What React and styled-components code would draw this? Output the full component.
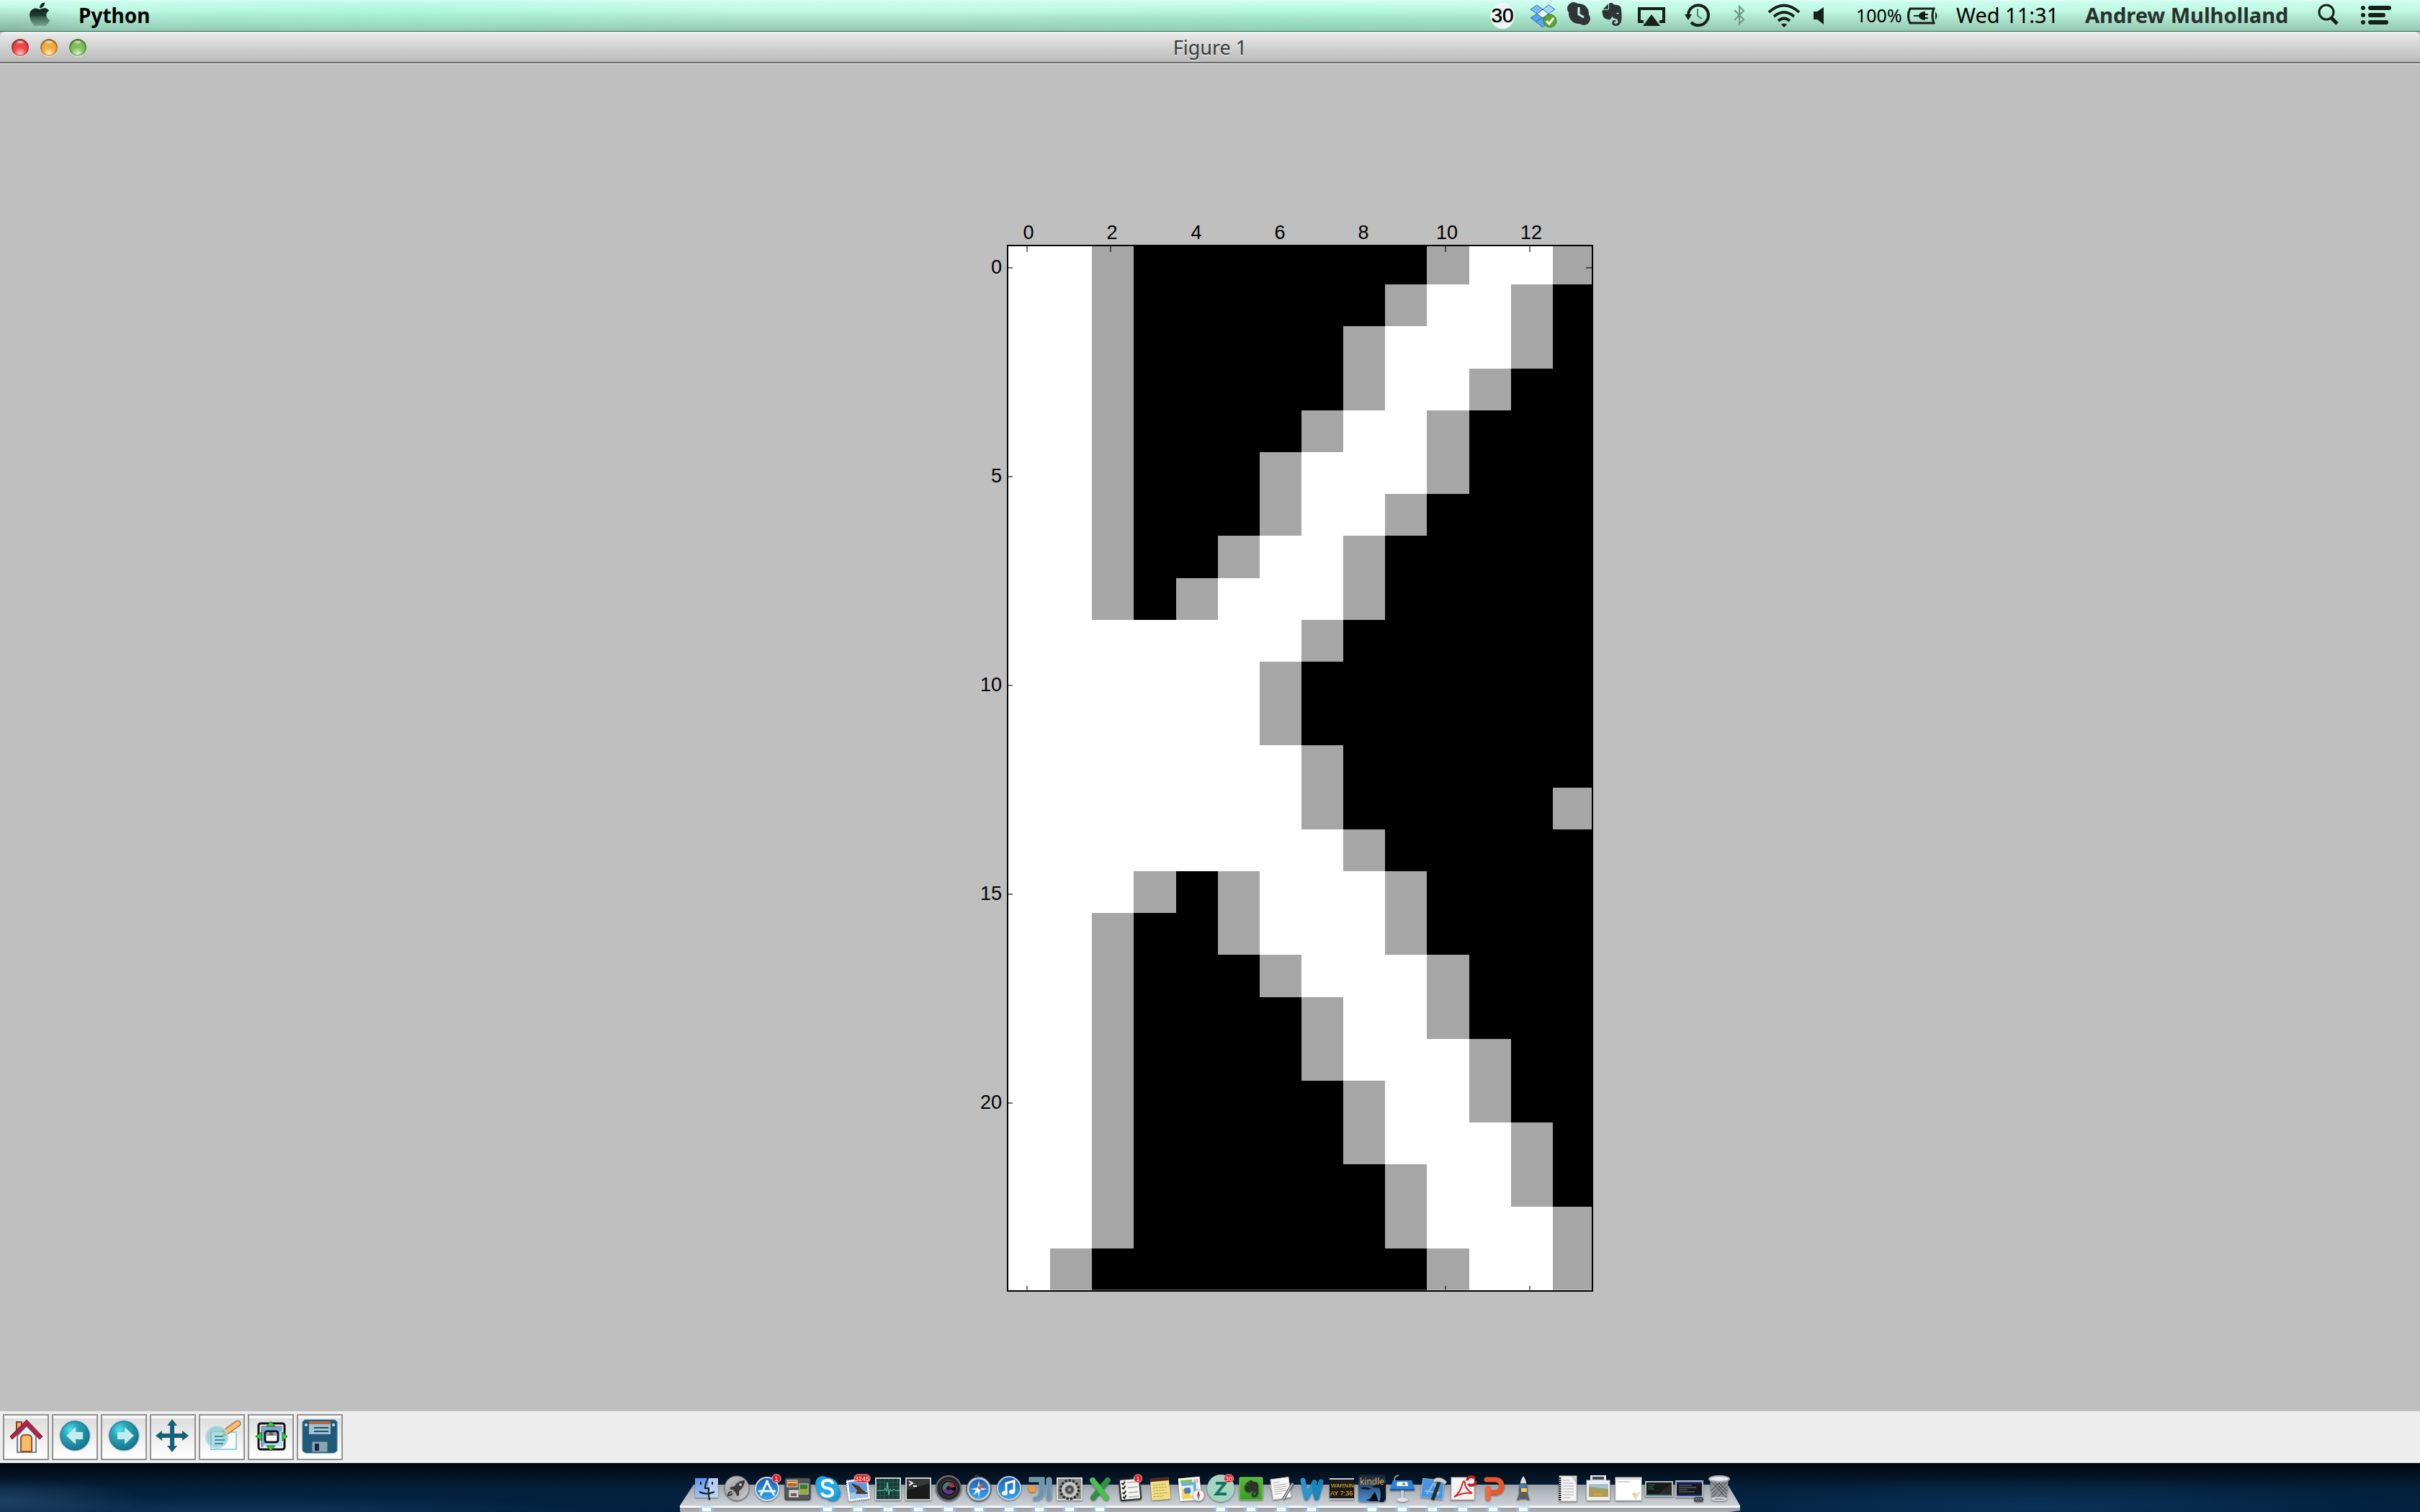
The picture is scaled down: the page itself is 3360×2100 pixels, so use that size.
import React from 'react';
import styled, { createGlobalStyle } from 'styled-components';
import { FaApple } from 'react-icons/fa';
import { SiEvernote } from 'react-icons/si';

const GlobalStyle = createGlobalStyle`
  *, *::before, *::after { box-sizing: border-box; }
  body { margin: 0; background: #04172b; }
  button { font: inherit; color: inherit; border: 0; background: none; padding: 0; margin: 0; }
`;

const uiFont = '"Noto Sans", "Open Sans", sans-serif';
const plotFont = '"Liberation Sans", Arial, sans-serif';

const Screen = styled.div`
  display: flex;
  flex-direction: column;
  min-height: 100vh;
  overflow: hidden;
  font-family: ${uiFont};
`;

/* ---------- menu bar ---------- */

const MenuBar = styled.header`
  display: flex;
  justify-content: space-between;
  height: 44px;
  border-bottom: 1px solid #2c6650;
  background:
    radial-gradient(ellipse 140px 40px at 0 44px, rgba(90, 120, 110, 0.25), transparent),
    radial-gradient(ellipse 500px 40px at 16% 60%, rgba(130, 240, 210, 0.28), transparent),
    radial-gradient(ellipse 500px 30px at 54% 80%, rgba(130, 230, 195, 0.35), transparent),
    linear-gradient(#e2fff8 0, #c9fdec 3px, #bff8e2 14px, #a8dcc7 30px, #93c8b3 43px);
  color: #000;
  text-shadow: 0 2px 0 rgba(255, 255, 255, 0.35);
`;

const MenuGroup = styled.nav`
  display: flex;
  align-items: flex-start;
  padding: 0 40px;
`;

const MenuItem = styled.button`
  display: flex;
  align-items: center;
  justify-content: flex-start;
  flex: none;
  width: ${(p) => p.$w}px;
  height: 42px;
  margin-left: ${(p) => p.$before || 0}px;
  font-size: ${(p) => p.$size || 29}px;
  font-weight: ${(p) => (p.$bold ? 700 : 400)};
  color: ${(p) => p.$color || '#000'};
  line-height: 42px;
  white-space: nowrap;
  svg { display: block; overflow: visible; }
`;

const DayBadge = styled(MenuItem)`
  justify-content: center;
  height: 36px;
  margin-top: 4px;
  border-radius: 50%;
  background: #eef5f4;
  font-family: ${plotFont};
  font-size: 28px;
  line-height: 36px;
  text-shadow: 0 0 1px #223;
`;

const ink = '#15201c';

const Extra = ({ label, w, before, children }) => (
  <MenuItem $w={w} $before={before} aria-label={label}>
    <svg width={w} height="42" viewBox={`0 0 ${w} 42`}>{children}</svg>
  </MenuItem>
);

/* ---------- window ---------- */

const Window = styled.main`
  display: flex;
  flex-direction: column;
  flex: 1;
  background: #bfbfbf;
`;

const TitleBar = styled.div`
  display: grid;
  grid-template-columns: 1fr auto 1fr;
  align-items: center;
  height: 45px;
  padding: 0 16px;
  border-bottom: 1px solid #f0f0f0;
  background: linear-gradient(#f2f2f2 0, #e4e4e4 6px, #b9b9b9 42px, #68686a 42px, #68686a 44px);
  border-radius: 8px 8px 0 0;
`;

const TitleText = styled.h1`
  margin: 0;
  font-size: 27px;
  font-weight: 400;
  line-height: 42px;
  color: #3c3c3c;
  text-shadow: 0 2px 0 rgba(255, 255, 255, 0.4);
`;

const Lights = styled.div`
  display: flex;
  gap: 16px;
`;

const Light = styled.button`
  width: 24px;
  height: 24px;
  border-radius: 50%;
  background:
    radial-gradient(ellipse 8px 3px at 50% 4px, rgba(255, 255, 255, 0.9), transparent),
    radial-gradient(ellipse 9px 8px at 50% 20px, rgba(255, 255, 255, 0.75), transparent),
    ${(p) => p.$fill};
  box-shadow: inset 0 1px 3px 1px ${(p) => p.$edge}, 0 1px 1px rgba(255, 255, 255, 0.7);
`;

const FigureArea = styled.section`
  display: flex;
  flex: 1;
  justify-content: center;
  align-items: flex-start;
  padding: 211px 0 160px 210px;
`;

const ChartSvg = styled.svg`
  display: block;
  font-family: ${plotFont};
  font-size: 27px;
`;

const ToolRow = styled.div`
  display: flex;
  align-items: center;
  gap: 4px;
  height: 72px;
  padding: 0 4px;
  background: #ededed;
`;

const ToolButton = styled.button`
  width: 64px;
  height: 64px;
  border: 2px solid #929292;
  background: linear-gradient(#f8f8f8 0, #f8f8f8 4px, #dedede 4px, #fdfdfd 56px);
  svg { display: block; }
`;

/* ---------- dock ---------- */

const Desktop = styled.footer`
  display: flex;
  justify-content: center;
  align-items: flex-end;
  height: 68px;
  background:
    radial-gradient(ellipse 200px 30px at 0 52px, rgba(70, 110, 150, 0.4), transparent),
    radial-gradient(ellipse 500px 24px at 10% 100%, rgba(40, 80, 125, 0.4), transparent),
    radial-gradient(ellipse 500px 40px at 84% 90%, rgba(20, 70, 120, 0.45), transparent),
    linear-gradient(#01060c 0, #04111f 14px, #05203b 36px, #03213f 68px);
`;

const DockShelf = styled.div`
  position: relative;
  display: flex;
  height: 52px;
  padding: 0 8px 0 16px;
  &::before {
    content: '';
    position: absolute;
    inset: 14px 0 0 0;
    background: linear-gradient(#9da3ab 0, #b4b9c0 12px, #cdd1d6 29px, #fff 30px, #fff 32px, #9b9ea3 32px, #aeb0b3 38px);
    clip-path: polygon(19px 0, 1455px 0, 100% 29px, 100% 36px, 99% 38px, 1px 38px, 0 36px, 0 29px);
  }
`;

const DockGap = styled.div`
  width: 20px;
`;

const DockItem = styled.button`
  position: relative;
  display: flex;
  flex-direction: column;
  align-items: center;
  width: 42px;
  height: 52px;
  svg { display: block; overflow: visible; filter: drop-shadow(0 1px 1px rgba(0, 0, 0, 0.5)); }
  &::after {
    content: '';
    width: 12px;
    height: 5px;
    margin-top: 4px;
    background: #fff;
    box-shadow: 0 0 5px 2px #9fd4f5;
    visibility: ${(p) => (p.$running ? 'visible' : 'hidden')};
  }
`;

/* ---------- chart ---------- */

/* w = full, g = partial, . = empty */
const rows = [
  'wwg.......gwwg', 'wwg......gwwg.', 'wwg.....gwwwg.', 'wwg.....gwwg..', 'wwg....gwwg...',
  'wwg...gwwwg...', 'wwg...gwwg....', 'wwg..gwwg.....', 'wwg.gwwwg.....', 'wwwwwwwg......',
  'wwwwwwg.......', 'wwwwwwg.......', 'wwwwwwwg......', 'wwwwwwwg.....g', 'wwwwwwwwg.....',
  'wwwg.gwwwg....', 'wwg..gwwwg....', 'wwg...gwwwg...', 'wwg....gwwg...', 'wwg....gwwwg..',
  'wwg.....gwwg..', 'wwg.....gwwwg.', 'wwg......gwwg.', 'wwg......gwwwg', 'wg........gwwg',
];

const tone = { w: '#fff', g: '#a6a6a6' };
const xTicks = [0, 2, 4, 6, 8, 10, 12];
const yTicks = [0, 5, 10, 15, 20];
const xAt = (t) => 76 + Math.round((t * 814) / 14);
const yAt = (t) => 72 + t * 58;

const Chart = () => (
  <ChartSvg width="870" height="1500" viewBox="0 0 870 1500" role="img" aria-label="Figure 1 plot">
    <defs>
      <clipPath id="axes"><rect x="49" y="41" width="813" height="1452" /></clipPath>
    </defs>
    <rect x="48" y="40" width="814" height="1454" fill="#fff" />
    <g clipPath="url(#axes)">
      <svg x="50" y="37" width="814" height="1455" viewBox="0 0 14 25" preserveAspectRatio="none" shapeRendering="crispEdges">
        <rect width="14" height="25" fill="#000" />
        {rows.map((row, y) => [...row].map((c, x) => c !== '.' && (
          <rect key={`${x}-${y}`} x={x} y={y} width="1" height="1" fill={tone[c]} />
        )))}
      </svg>
    </g>
    <g stroke="#000" strokeOpacity="0.55" strokeWidth="2">
      {xTicks.map((t) => <path key={t} d={`M${xAt(t)} 42v8M${xAt(t)} 1486v6`} />)}
      {yTicks.map((t) => <path key={t} d={`M50 ${yAt(t)}h6M860 ${yAt(t)}h-8`} />)}
    </g>
    <path d="M50 1492H860" stroke="#fff" strokeOpacity="0.8" />
    <rect x="49" y="41" width="812" height="1452" fill="none" stroke="#000" strokeWidth="2" />
    {xTicks.map((t) => <text key={t} x={xAt(t) + 2} y="32" textAnchor="middle">{t}</text>)}
    {yTicks.map((t) => <text key={t} x="41" y={yAt(t) + 8} textAnchor="end">{t}</text>)}
  </ChartSvg>
);

/* ---------- toolbar icons ---------- */

const ball = (
  <>
    <circle cx="30" cy="28" r="22" fill="#8fbfe6" opacity="0.6" />
    <circle cx="30" cy="28" r="20" fill="url(#teal)" stroke="#146077" strokeWidth="1" />
  </>
);

const tools = [
  ['Home', (
    <>
      <path d="M17 9h7v14h-7z" fill="#f5b95c" stroke="#8a3b35" strokeWidth="2" />
      <path d="M18 28L31 14l13 14v23H18z" fill="#e9eef0" stroke="#6d8a8f" strokeWidth="2" />
      <path d="M23 50V31q1-4 5-4h5q4 0 5 4v19z" fill="#f7bd62" stroke="#984c33" strokeWidth="2" />
      <path d="M31 6L8 29l3 4 20-19 18 19 4-4z" fill="#b0234a" stroke="#6f1c33" strokeWidth="1" />
    </>
  )],
  ['Back', <>{ball}<path d="M18 28l13-12v7h10v10H31v7z" fill="#c3ecee" /></>],
  ['Forward', <>{ball}<path d="M44 28L31 16v7H21v10h10v7z" fill="#c3ecee" /></>],
  ['Pan', (
    <g fill="#176079">
      <path d="M26 12h6v32h-6zM14 25h31v6H14z" />
      <path d="M29 5l7 9H22zM29 51l7-9H22zM6 28l9-7v14zM52 28l-9-7v14z" />
    </g>
  )],
  ['Zoom', (
    <>
      <rect x="15" y="23" width="35" height="24" fill="#fbf9fd" stroke="#93d3dd" strokeWidth="2" />
      <path d="M34 24L52 11" stroke="#ad7843" strokeWidth="9" strokeLinecap="round" />
      <path d="M34 24L52 11" stroke="#fbbd72" strokeWidth="6" strokeLinecap="round" />
      <circle cx="23" cy="30" r="15" fill="#86c5ce" fillOpacity="0.7" stroke="#b5dce4" strokeWidth="2" />
      <path d="M16 23h16v17H16z" fill="#b4e0e6" fillOpacity="0.7" />
      <path d="M20 29h12M20 34h14M20 39h12" stroke="#3d91a3" strokeWidth="2" />
    </>
  )],
  ['Subplots', (
    <>
      <rect x="13" y="11" width="36" height="36" rx="3" fill="#fff" stroke="#111" strokeWidth="3" />
      <path d="M16 14h30v4H20v26h-4z" fill="#999" />
      <rect x="18" y="17" width="28" height="26" fill="#6eabe2" />
      <path d="M18 43L46 20v23z" fill="#b5dff5" />
      <rect x="22" y="22" width="18" height="15" rx="3" fill="#fff" stroke="#111" strokeWidth="3" />
      <path d="M24 23h14v5H24z" fill="#999" />
      <path d="M28 23h5v5h-5z" fill="#567" />
      <g fill="#3ccc42" stroke="#176b1c" strokeWidth="1">
        <path d="M30 8l6 7H24zM30 49l6-7H24zM9 29l8-6v12zM53 29l-7-6v12z" />
      </g>
    </>
  )],
  ['Save', (
    <>
      <path d="M9 6h42l3 3v40l-4 3H10l-4-3V9z" fill="#205a78" stroke="#3f7e9d" strokeWidth="1" />
      <path d="M15 8h30v4H15z" fill="#b8683d" />
      <path d="M15 12h30v14H15z" fill="#9fc1d0" />
      <path d="M22 17h20M22 22h20" stroke="#24516b" strokeWidth="2" />
      <path d="M19 36h22v15H19z" fill="#8ba6b2" stroke="#35536a" strokeWidth="1" />
      <path d="M23 39h6v10h-6z" fill="#16274a" />
      <circle cx="11" cy="13" r="2" fill="#d4e6ee" />
      <circle cx="49" cy="13" r="2" fill="#d4e6ee" />
    </>
  )],
];

/* ---------- dock icons ---------- */

const Badge = ({ x, w, children }) => (
  <g>
    <rect x={x - w / 2} y="0" width={w} height="11" rx="5" fill="#dc1f2b" stroke="#f4b7ba" strokeWidth="1" />
    <text x={x} y="9" fontSize="9" textAnchor="middle" fill="#fff" fontFamily={plotFont}>{children}</text>
  </g>
);

const dockApps = [
  ['Finder', 1, (
    <>
      <rect x="5" y="5" width="32" height="27" fill="url(#finder)" />
      <path d="M24 5h13v27H23z" fill="#c7d8f5" opacity="0.8" />
      <path d="M25 2q-6 9-6 17h5q-1 8 1 16M11 24q10 5 21 0M13 10v4M29 10v4" fill="none" stroke="#15181f" strokeWidth="2" />
    </>
  )],
  ['Launchpad', 0, (
    <>
      <circle cx="21" cy="19" r="17" fill="url(#silver)" stroke="#777" />
      <path d="M32 8q-9 0-14 8l-7 2 2 3 3 0 4 5 1 4 3-1 0-6q8-6 8-15z" fill="#3b3b3d" />
      <circle cx="26" cy="14" r="2" fill="#bbb" />
      <path d="M14 24q-5 0-5 5 4 0 6-3" fill="none" stroke="#3b3b3d" strokeWidth="2" />
    </>
  )],
  ['App Store', 0, (
    <>
      <circle cx="21" cy="20" r="16" fill="url(#blue)" stroke="#d6dce2" strokeWidth="2" />
      <path d="M22 8L12 29M20 8l11 21M9 23h24" stroke="#eaf4ff" strokeWidth="3" />
      <Badge x={34} w={12}>1</Badge>
    </>
  )],
  ['Mission Control', 0, (
    <>
      <rect x="4" y="5" width="35" height="30" rx="2" fill="#55565a" stroke="#37383b" />
      <rect x="7" y="8" width="14" height="9" fill="#b8632a" stroke="#ddd" />
      <path d="M8 10h12v2H8z" fill="#f3bd62" />
      <rect x="24" y="13" width="12" height="14" fill="#3c7a2b" stroke="#ddd" />
      <path d="M25 20h10v6H25z" fill="#9aa82c" />
      <rect x="10" y="22" width="12" height="9" fill="#b8d7b4" stroke="#eee" />
      <path d="M12 26h8v4h-8z" fill="#8f4a6c" />
    </>
  )],
  ['Skype', 1, (
    <>
      <circle cx="14" cy="12" r="10" fill="#1ea5e0" /><circle cx="28" cy="26" r="11" fill="#1a98d5" />
      <circle cx="21" cy="19" r="15" fill="#22aae6" />
      <path d="M28 13q-1-5-7-5-7 0-7 5t7 6q7 1 7 6t-7 5q-7 0-8-5" fill="none" stroke="#fff" strokeWidth="4" />
    </>
  )],
  ['Mail', 1, (
    <>
      <g transform="rotate(-7 21 20)">
        <rect x="7" y="7" width="29" height="28" fill="#fff" stroke="#fff" strokeWidth="2" strokeDasharray="2 1" />
        <rect x="9" y="9" width="25" height="24" fill="#5f96dc" />
        <path d="M9 24h25v9H9z" fill="#9fc4f0" />
        <path d="M14 12l9 5 4 6 7 5-8-1-8-1 3-4z" fill="#5a3c22" stroke="#3c2a1a" />
      </g>
      <Badge x={27} w={22}>3245</Badge>
    </>
  )],
  ['Activity Monitor', 1, (
    <>
      <rect x="4" y="5" width="34" height="30" fill="#183a35" stroke="#c9cccb" strokeWidth="2" />
      <path d="M10 6v28M16 6v28M22 6v28M28 6v28M34 6v28M5 11h32M5 17h32M5 23h32M5 29h32" stroke="#2d5f56" strokeWidth="1" />
      <path d="M6 22h9l2-3 2 4 1-12 2 17 2-8 2 3 3-3 2 2h6" fill="none" stroke="#5fd8b4" strokeWidth="1" />
    </>
  )],
  ['Terminal', 1, (
    <>
      <rect x="4" y="5" width="34" height="30" fill="#1a1b1c" stroke="#c9cccb" strokeWidth="2" />
      <path d="M5 22L37 12V6H5z" fill="#4a4b4c" opacity="0.6" />
      <path d="M8 9l5 3-5 3M14 16h5" fill="none" stroke="#fff" strokeWidth="2" />
    </>
  )],
  ['Photo Booth', 1, (
    <>
      <circle cx="21" cy="19" r="17" fill="#26272a" stroke="#707276" strokeWidth="2" />
      <circle cx="21" cy="19" r="11" fill="#0b0b10" stroke="#55555c" />
      <path d="M21 10a9 9 0 0 0-8 12l8-3z" fill="#437c6d" /><path d="M21 10a9 9 0 0 1 9 7l-9 2z" fill="#a3324e" />
      <path d="M13 22a9 9 0 0 0 16 1l-8-4z" fill="#63398c" /><circle cx="21" cy="19" r="3" fill="#27132f" />
    </>
  )],
  ['Safari', 1, (
    <>
      <circle cx="21" cy="20" r="15" fill="url(#blue)" stroke="#c7c9c9" strokeWidth="3" />
      <circle cx="21" cy="20" r="17" fill="none" stroke="#444" />
      <path d="M21 8l2 10 10 2-10 2-2 10-2-10-10-2 10-2z" fill="#cde7fa" />
      <path d="M29 11l-6 11-4-4z" fill="#e0522e" /><path d="M13 29l6-11 4 4z" fill="#fff" />
      <circle cx="18" cy="3" r="2" fill="none" stroke="#667" />
    </>
  )],
  ['iTunes', 1, (
    <>
      <circle cx="21" cy="19" r="16" fill="url(#blue)" stroke="#c3cdd6" strokeWidth="2" />
      <path d="M17 26V12l11-3v14" fill="none" stroke="#fff" strokeWidth="3" />
      <ellipse cx="15" cy="26" rx="4" ry="3" fill="#fff" /><ellipse cx="25" cy="24" rx="4" ry="3" fill="#fff" />
    </>
  )],
  ['IntelliJ IDEA', 1, (
    <>
      <path d="M7 4h21v20q0 12-15 12v-5q8 0 8-8V10H7z" fill="#6d94ab" stroke="#8db0c4" />
      <rect x="31" y="4" width="7" height="32" rx="3" fill="#6d94ab" stroke="#8db0c4" />
      <circle cx="11" cy="20" r="5" fill="#f59a35" />
    </>
  )],
  ['System Preferences', 1, (
    <>
      <rect x="4" y="5" width="34" height="30" fill="#8d8f91" stroke="#d9dada" strokeWidth="2" />
      <circle cx="21" cy="21" r="12" fill="none" stroke="#28292b" strokeWidth="5" strokeDasharray="3 2" />
      <circle cx="21" cy="21" r="9" fill="none" stroke="#c6c6c6" strokeWidth="4" />
      <circle cx="21" cy="21" r="5" fill="#55575a" stroke="#333" />
      <circle cx="21" cy="21" r="2" fill="#aaa" />
    </>
  )],
  ['Excel', 1, (
    <g fill="none" strokeLinecap="round" strokeWidth="8">
      <path d="M32 8L12 32" stroke="#2e9242" /><path d="M11 8l19 24" stroke="#4cbc55" />
    </g>
  )],
  ['Reminders', 0, (
    <>
      <g transform="rotate(-5 21 20)">
        <rect x="7" y="6" width="28" height="29" rx="2" fill="#f6f6f4" stroke="#2a2a2b" strokeWidth="2" />
        <path d="M10 11l2 2 3-4M10 17l2 2 3-4M10 24l2 2 3-4M10 30l2 2 3-4" fill="none" stroke="#222" strokeWidth="2" />
        <path d="M18 11h14M18 18h14M18 25h14M18 31h14" stroke="#bbb" strokeWidth="2" />
      </g>
      <Badge x={32} w={11}>1</Badge>
    </>
  )],
  ['Stickies', 0, (
    <g transform="rotate(-5 21 20)">
      <rect x="8" y="5" width="26" height="30" fill="#f3df80" /><rect x="8" y="4" width="26" height="5" fill="#4b2b23" />
      <path d="M11 14h18M11 18h20M11 22h17M11 26h20M11 30h14" stroke="#a8924a" strokeDasharray="3 1" />
    </g>
  )],
  ['Maps', 0, (
    <>
      <g transform="rotate(-5 21 20)">
        <rect x="6" y="5" width="28" height="30" fill="#f2efe4" stroke="#fff" strokeWidth="2" />
        <path d="M8 7h16v4H8z" fill="#79c356" /><path d="M26 7h7v5h-7z" fill="#efb7bd" />
        <path d="M9 13h18v16" fill="none" stroke="#5fb3e8" strokeWidth="4" />
        <path d="M9 17l16 16H9z" fill="#f6cf4d" /><rect x="12" y="18" width="9" height="8" rx="2" fill="#4a79c9" />
      </g>
      <circle cx="32" cy="29" r="8" fill="#f4f4f4" stroke="#aaa" />
      <path d="M32 22l2 7h-4z" fill="#d22" /><path d="M32 36l2-7h-4z" fill="#888" />
    </>
  )],
  ['Zotero', 1, (
    <>
      <circle cx="21" cy="19" r="19" fill="#a5d5c2" />
      <path d="M14 12h13L15 27h14" fill="none" stroke="#17765d" strokeWidth="4" />
      <Badge x={32} w={13}>30</Badge>
    </>
  )],
  ['Evernote', 1, (
    <>
      <rect x="5" y="4" width="32" height="31" rx="1" fill="url(#green)" stroke="#83d35b" />
      <SiEvernote x="10" y="8" size={23} color="#2c332c" />
    </>
  )],
  ['TextEdit', 1, (
    <>
      <path d="M4 14l26 14-15 8z" fill="#edc84b" />
      <g transform="rotate(-8 21 20)">
        <rect x="8" y="5" width="25" height="28" fill="#f8f8f8" stroke="#ccc" />
        <path d="M11 10h9M11 14h18M11 17h18M11 20h16M11 23h18M11 26h10" stroke="#aaa" />
      </g>
      <path d="M37 12L24 34" stroke="#55585c" strokeWidth="4" /><path d="M37 12L24 34" stroke="#b7babd" strokeWidth="2" />
    </>
  )],
  ['Word', 1, (
    <g fill="none" strokeLinecap="round" strokeLinejoin="round" strokeWidth="7">
      <path d="M9 8l5 24 11-21" stroke="#2695cd" /><path d="M24 13l4 19 6-22" stroke="#1883bd" />
    </g>
  )],
  ['Console', 0, (
    <>
      <rect x="4" y="5" width="34" height="30" fill="#1b1a16" /><path d="M4 6h34M4 34h34" stroke="#ccc" strokeWidth="2" />
      <text x="6" y="18" fontSize="8" fill="#f1c43f" fontFamily={plotFont}>WARNIN</text>
      <text x="5" y="29" fontSize="9" fill="#f1c43f" fontFamily={plotFont}>AY 7:36</text>
    </>
  )],
  ['Kindle', 1, (
    <>
      <rect x="2" y="0" width="38" height="38" rx="4" fill="url(#kindle)" />
      <path d="M31 38q4-10 0-20-8 1-10-1 8-6 19-5v22l-3 4zM4 19q8-4 16 1-8 2-16-1z" fill="#0a1422" />
      <path d="M17 37l4-8 4-5 2 5 3 8zM12 36l9-4 1 4z" fill="#0a0d13" />
      <text x="21" y="14" fontSize="12" textAnchor="middle" fill="#f7a63c" fontFamily={uiFont}>kindle</text>
    </>
  )],
  ['Keynote', 1, (
    <>
      <path d="M19 20h4v14h-4z" fill="#c9d0dc" /><ellipse cx="21" cy="35" rx="8" ry="3" fill="#dfe3ea" />
      <path d="M8 8h26l4 12H4z" fill="#2e83d8" /><path d="M4 20h34v2H4z" fill="#1b579f" />
      <path d="M14 10h14l1 6H13z" fill="#eef3f7" /><circle cx="23" cy="13" r="2" fill="#5fae4b" />
      <path d="M10 8q0-6 6-7" fill="none" stroke="#8b9097" strokeWidth="2" />
    </>
  )],
  ['Xcode', 1, (
    <>
      <g transform="rotate(7 21 20)">
        <rect x="6" y="7" width="30" height="26" fill="#4a94db" stroke="#91c5f2" />
        <path d="M14 28l8-17 8 17M11 24h21" fill="none" stroke="#8fc0ee" strokeWidth="2" />
      </g>
      <path d="M31 8L21 35" stroke="#27292c" strokeWidth="5" /><path d="M22 7q8-7 19 3l-3 4q-6-6-16-3z" fill="#cfd2d6" stroke="#6f7377" />
    </>
  )],
  ['Adobe Reader', 1, (
    <>
      <rect x="5" y="4" width="32" height="31" fill="#f4f4f4" stroke="#bbb" />
      <path d="M9 31q9-6 12-20 2-4 3 0-1 8 10 15-12-2-25 5z" fill="none" stroke="#d32222" strokeWidth="2" />
      <circle cx="33" cy="9" r="6" fill="none" stroke="#c91e1e" strokeWidth="4" strokeDasharray="14 5" />
    </>
  )],
  ['PowerPoint', 1, (
    <>
      <path d="M12 7h12q9 1 9 9t-9 9h-8" fill="none" stroke="#e8562b" strokeWidth="7" strokeLinecap="round" />
      <path d="M14 19v14" stroke="#f0683b" strokeWidth="7" strokeLinecap="round" />
    </>
  )],
  ['Python Launcher', 1, (
    <>
      <path d="M21 2q7 10 6 25l3 9-5-2h-8l-5 2 3-9Q14 12 21 2z" fill="#5b5e61" /><path d="M21 2q4 6 4 10h-8q0-4 4-10z" fill="#d7d9da" />
      <path d="M16 14h8v5h-8z" fill="#4380b7" /><path d="M18 19h8v5h-8z" fill="#f4cf43" />
    </>
  )],
];

const dockFiles = [
  ['Document', (
    <>
      <rect x="9" y="2" width="24" height="35" fill="#f4f4f4" stroke="#bbb" />
      <path d="M14 8h9M14 12h15M14 16h15M14 20h15M14 24h15M14 28h15M14 32h10" stroke="#aaa" />
      <path d="M10 4v32" stroke="#222" strokeWidth="3" strokeDasharray="2 1" /><path d="M25 2l8 12v-12z" fill="#ccc" />
    </>
  )],
  ['Pictures', (
    <>
      <rect x="10" y="1" width="22" height="8" fill="#e8e8e8" /><path d="M13 3h16v4H13z" fill="#364a63" />
      <rect x="5" y="8" width="32" height="28" fill="#f1f1f1" stroke="#ccc" /><rect x="8" y="13" width="27" height="18" fill="#a79c62" />
      <path d="M8 13h27v7L8 17z" fill="#aac0cf" /><path d="M15 26h12v3H15z" fill="#d8a71d" />
    </>
  )],
  ['Text window', (
    <>
      <rect x="3" y="4" width="36" height="32" fill="#fff" stroke="#ccc" /><path d="M4 6h34M5 10h18" stroke="#aaa" />
      <path d="M26 27l12-3-7 12z" fill="#dedede" /><path d="M26 27l4-3 1 9z" fill="#eadb53" />
    </>
  )],
  ['Terminal window', (
    <>
      <rect x="3" y="10" width="37" height="20" fill="#15191a" stroke="#b4b8bc" strokeWidth="2" />
      <path d="M6 14h10M6 17h7M6 20h9" stroke="#3f7d5a" /><path d="M5 28h33" stroke="#2c9a86" /><path d="M39 12v16L19 28z" fill="#3a3233" opacity="0.6" />
    </>
  )],
  ['Console window', (
    <>
      <rect x="3" y="9" width="37" height="22" fill="#15171d" stroke="#b4b8bc" strokeWidth="2" />
      <path d="M4 11h35M4 29h35" stroke="#2a3f9e" strokeWidth="2" /><path d="M7 15h18M7 18h24M7 21h12M7 24h22" stroke="#77808a" />
      <rect x="28" y="31" width="13" height="7" rx="3" fill="#4c4f55" /><path d="M31 34h7" stroke="#ddd" strokeDasharray="1 2" />
    </>
  )],
  ['Trash', (
    <>
      <path d="M8 6h26l-3 28q-10 4-20 0z" fill="#8d9094" />
      <path d="M10 10l21 22M14 10l17 17M19 10l13 13M32 10L12 31M28 10L11 27M23 10L10 22M31 17L17 34" stroke="#45474b" />
      <ellipse cx="21" cy="6" rx="14" ry="4" fill="#e8e9ec" stroke="#a9abb2" strokeWidth="2" /><ellipse cx="21" cy="34" rx="10" ry="2" fill="none" stroke="#d4d6d8" strokeWidth="2" />
    </>
  )],
];

const PaintSvg = styled.svg`
  position: absolute;
`;

const SharedPaints = () => (
  <PaintSvg width="0" height="0" aria-hidden="true">
    <defs>
      <linearGradient id="appleInk" x2="0" y2="1"><stop offset="0" stopColor="#07130f" /><stop offset=".55" stopColor="#1c3a30" /><stop offset=".6" stopColor="#345c4e" /><stop offset="1" stopColor="#7fa899" /></linearGradient>
      <radialGradient id="teal" cx=".35" cy=".3" r=".8"><stop offset="0" stopColor="#4fe6ea" /><stop offset=".35" stopColor="#2aa3b3" /><stop offset="1" stopColor="#166f86" /></radialGradient>
      <linearGradient id="finder" x2="0" y2="1"><stop offset="0" stopColor="#5d95ea" /><stop offset="1" stopColor="#a9c3ec" /></linearGradient>
      <linearGradient id="silver" x2="1" y2="1"><stop offset="0" stopColor="#c8c8c8" /><stop offset=".5" stopColor="#a2a2a2" /><stop offset="1" stopColor="#d5d5d5" /></linearGradient>
      <linearGradient id="blue" x2="0" y2="1"><stop offset="0" stopColor="#1c5db4" /><stop offset="1" stopColor="#38a7ef" /></linearGradient>
      <linearGradient id="green" x2="0" y2="1"><stop offset="0" stopColor="#55b936" /><stop offset="1" stopColor="#3f9c2a" /></linearGradient>
      <linearGradient id="kindle" x2="0" y2="1"><stop offset="0" stopColor="#15202e" /><stop offset=".45" stopColor="#2b5587" /><stop offset="1" stopColor="#4f92d3" /></linearGradient>
    </defs>
  </PaintSvg>
);

export default function App() {
  return (
    <Screen>
      <GlobalStyle />
      <SharedPaints />
      <MenuBar>
        <MenuGroup aria-label="Application menu">
          <MenuItem $w={30} aria-label="Apple menu">
            <svg width="30" height="42" viewBox="0 0 30 42"><FaApple x="-4" y="1" size={38} fill="url(#appleInk)" /></svg>
          </MenuItem>
          <MenuItem $w={100} $before={39} $size={28} $bold>Python</MenuItem>
        </MenuGroup>
        <MenuGroup aria-label="Status menus">
          <DayBadge $w={34}>30</DayBadge>
          <Extra label="Dropbox" w={36} before={22}>
            <g stroke="#2f6fae" strokeWidth="1">
              <path d="M0 13l9-6 8 6-8 6z" fill="#7cbcf0" /><path d="M34 13l-9-6-8 6 8 6z" fill="#a9d5f7" />
              <path d="M0 25l9-6 8 6-8 6z" fill="#5aa6ea" /><path d="M34 25l-9-6-8 6 8 6z" fill="#8fc7f4" />
              <path d="M17 13l8 6-8 6-8-6z" fill="#eef7fe" /><path d="M7 30l10-5 10 5-10 8z" fill="#5ba7ea" />
            </g>
            <circle cx="27" cy="29" r="9" fill="#5da52b" stroke="#3f7a1c" />
            <path d="M22 29l4 4 6-8" fill="none" stroke="#fff" strokeWidth="3" />
          </Extra>
          <Extra label="Skype" w={34} before={14}>
            <circle cx="10" cy="12" r="9" fill="#303436" /><circle cx="24" cy="26" r="9" fill="#303436" /><circle cx="17" cy="19" r="14" fill="#303436" />
            <path d="M17 10v10l7 4" fill="none" stroke="#c8f3e4" strokeWidth="3" />
          </Extra>
          <Extra label="Evernote" w={28} before={15}><SiEvernote x="-2" y="4" size={32} color="#2f3536" /></Extra>
          <Extra label="AirPlay" w={38} before={22}>
            <path d="M8 30H2V12h34v18h-6" fill="none" stroke={ink} strokeWidth="4" /><path d="M19 20l12 16H7z" fill={ink} />
          </Extra>
          <Extra label="Time Machine" w={34} before={27}>
            <path d="M5 21a14 14 0 1 1 4 10" fill="none" stroke={ink} strokeWidth="4" /><path d="M0 20h10l-5 8z" fill={ink} />
            <path d="M18 12v10l6 4" fill="none" stroke="#587e70" strokeWidth="2" />
          </Extra>
          <Extra label="Bluetooth" w={16} before={34}>
            <path d="M1 14l13 13-6 6V9l6 6L1 28" fill="none" stroke="#6f9686" strokeWidth="2" />
          </Extra>
          <Extra label="Wi-Fi" w={44} before={32}>
            <g fill="none" stroke={ink} strokeWidth="4">
              <path d="M1 17q21-19 42 0M8 23q14-12 28 0M14 29q8-7 16 0" />
            </g>
            <path d="M18 34q4-3 8 0l-4 4z" fill={ink} />
          </Extra>
          <Extra label="Volume" w={14} before={19}><path d="M0 16h5l9-6v24l-9-7H0z" fill={ink} /></Extra>
          <MenuItem $w={61} $before={45} $size={25}>100%</MenuItem>
          <Extra label="Battery charging" w={44} before={9}>
            <path d="M38 12H5q-5 10 0 20h33q-4-10 0-20z" fill="none" stroke={ink} strokeWidth="3" />
            <path d="M40 16q5 6 0 12z" fill={ink} />
            <path d="M10 21h7q2-5 9-5v3h4v2h-4v3h4v2h-4v2q-7 0-9-5h-7z" fill={ink} />
          </Extra>
          <MenuItem $w={144} $before={25}>Wed 11:31</MenuItem>
          <MenuItem $w={280} $before={35} $bold $color="#26322e">Andrew Mulholland</MenuItem>
          <Extra label="Spotlight" w={30} before={43}>
            <circle cx="12" cy="17" r="10" fill="none" stroke={ink} strokeWidth="3" /><path d="M18 24l9 9" stroke={ink} strokeWidth="5" />
          </Extra>
          <Extra label="Notification Center" w={42} before={30}>
            <g stroke={ink} strokeWidth="6" strokeLinecap="round">
              <path d="M3 11h0M3 21h0M3 31h0M13 11h26M13 21h18M13 31h22" />
            </g>
          </Extra>
        </MenuGroup>
      </MenuBar>

      <Window>
        <TitleBar>
          <Lights>
            <Light aria-label="Close" $fill="#f04646" $edge="#7c1a1a" />
            <Light aria-label="Minimize" $fill="#f0ac44" $edge="#7d4c12" />
            <Light aria-label="Zoom window" $fill="#80c15c" $edge="#2f5e1c" />
          </Lights>
          <TitleText>Figure 1</TitleText>
        </TitleBar>
        <FigureArea><Chart /></FigureArea>
        <ToolRow role="toolbar" aria-label="Plot tools">
          {tools.map(([name, art]) => (
            <ToolButton key={name} aria-label={name}>
              <svg width="60" height="60" viewBox="0 0 60 60">{art}</svg>
            </ToolButton>
          ))}
        </ToolRow>
      </Window>

      <Desktop>
        <DockShelf>
          {dockApps.map(([name, running, art]) => (
            <DockItem key={name} aria-label={name} $running={running}>
              <svg width="42" height="42" viewBox="0 0 42 42">{art}</svg>
            </DockItem>
          ))}
          <DockGap />
          {dockFiles.map(([name, art]) => (
            <DockItem key={name} aria-label={name}>
              <svg width="42" height="42" viewBox="0 0 42 42">{art}</svg>
            </DockItem>
          ))}
        </DockShelf>
      </Desktop>
    </Screen>
  );
}
